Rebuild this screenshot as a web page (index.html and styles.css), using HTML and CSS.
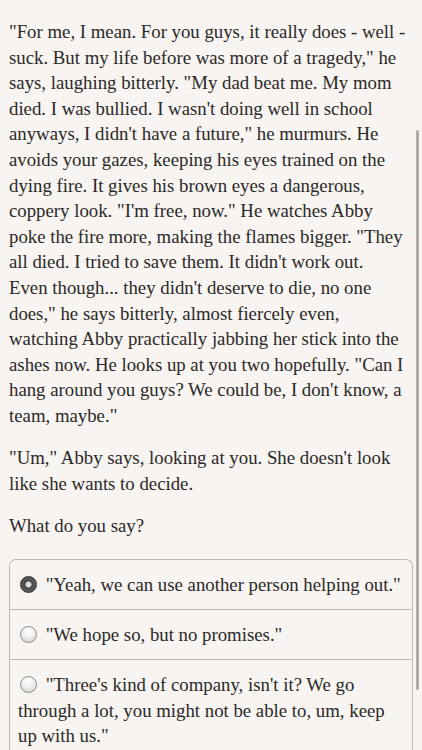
FILE: index.html
```html
<!DOCTYPE html>
<html lang="en">
<head>
    <meta charset="UTF-8">
    <meta name="viewport" content="width=device-width, initial-scale=1.0">
    <title>Story</title>
    <link rel="stylesheet" href="styles.css">
</head>
<body>
    <div id="story">
        <p>"For me, I mean. For you guys, it really does - well - suck. But my life before was more of a tragedy," he says, laughing bitterly. "My dad beat me. My mom died. I was bullied. I wasn't doing well in school anyways, I didn't have a future," he murmurs. He avoids your gazes, keeping his eyes trained on the dying fire. It gives his brown eyes a dangerous, coppery look. "I'm free, now." He watches Abby poke the fire more, making the flames bigger. "They all died. I tried to save them. It didn't work out. Even though... they didn't deserve to die, no one does," he says bitterly, almost fiercely even, watching Abby practically jabbing her stick into the ashes now. He looks up at you two hopefully. "Can I hang around you guys? We could be, I don't know, a team, maybe."</p>
        <p>"Um," Abby says, looking at you. She doesn't look like she wants to decide.</p>
        <p>What do you say?</p>

        <div id="choices">
            <label class="choice selected"><span class="radio"></span> "Yeah, we can use another person helping out."</label>
            <label class="choice"><span class="radio"></span> "We hope so, but no promises."</label>
            <label class="choice"><span class="radio"></span> "Three's kind of company, isn't it? We go through a lot, you might not be able to, um, keep up with us."</label>
        </div>
    </div>
    <div id="scrollbar"></div>
</body>
</html>
```
FILE: styles.css
```css
body {
	background-color: #f7f4f1;
	margin: 0;
	color: #2b2928;
	font-family: "Liberation Serif", "Times New Roman", serif;
	font-size: 18.8px;
	line-height: 25.6px;
}

#story {
	padding: 19px 9px 0 9px;
}

p {
	margin: 0 6.6px 16.5px 0;
}

#choices {
	margin-top: 21px;
	border: 1px solid #bdb9b5;
	border-bottom: none;
	border-radius: 7px 7px 0 0;
}

.choice {
	display: block;
	padding: 11.7px 8px;
	border-bottom: 1px solid #bdb9b5;
}

.radio {
	display: inline-block;
	width: 15px;
	height: 15px;
	margin: 0 4px 0 2px;
	border: 1px solid #8e8c8a;
	border-radius: 50%;
	background: radial-gradient(circle at 50% 30%, #ffffff 0%, #f0efee 45%, #c9c7c5 100%);
	vertical-align: -2px;
}

.selected .radio {
	border-color: #333333;
	background: radial-gradient(circle at 50% 50%, #e8e8e8 0%, #d0d0d0 24%, #444444 34%, #5c5c5c 65%, #2a2a2a 100%);
}

#scrollbar {
	position: fixed;
	right: 3px;
	top: 130px;
	width: 3px;
	height: 560px;
	border-radius: 2px;
	background: #aeaba8;
}
```
